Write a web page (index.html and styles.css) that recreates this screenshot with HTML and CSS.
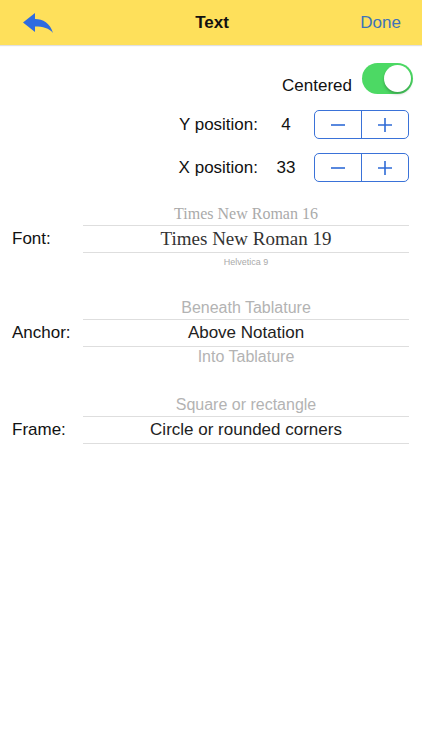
FILE: index.html
```html
<!DOCTYPE html>
<html lang="en">
<head>
  <meta charset="UTF-8">
  <meta name="viewport" content="width=device-width, initial-scale=1.0">
  <title>Text</title>
  <link rel="stylesheet" href="styles.css">
</head>
<body>
<div class="navbar">
  <div class="nav-back">
    <svg width="30" height="21" viewBox="0 0 30 21">
      <path d="M0 9.5 L12 0 L12 6 C20 6 27 10 30 20 C26 15 20 13.5 12 13.5 L12 19 Z" fill="#2d6be0"/>
    </svg>
  </div>
  <div class="nav-title">Text</div>
  <div class="nav-done">Done</div>
</div>

<div class="content">
  <div class="toggle-row">
    <span class="toggle-label">Centered</span>
    <div class="switch on"><div class="knob"></div></div>
  </div>

  <div class="step-row">
    <span class="step-label">Y position:</span>
    <span class="step-value">4</span>
    <div class="stepper">
      <div class="step-btn">
        <svg width="16" height="16" viewBox="0 0 16 16"><path d="M1 8 H15" stroke="#2f6bd6" stroke-width="1.6"/></svg>
      </div>
      <div class="step-btn">
        <svg width="16" height="16" viewBox="0 0 16 16"><path d="M1 8 H15 M8 1 V15" stroke="#2f6bd6" stroke-width="1.6"/></svg>
      </div>
    </div>
  </div>

  <div class="step-row">
    <span class="step-label">X position:</span>
    <span class="step-value">33</span>
    <div class="stepper">
      <div class="step-btn">
        <svg width="16" height="16" viewBox="0 0 16 16"><path d="M1 8 H15" stroke="#2f6bd6" stroke-width="1.6"/></svg>
      </div>
      <div class="step-btn">
        <svg width="16" height="16" viewBox="0 0 16 16"><path d="M1 8 H15 M8 1 V15" stroke="#2f6bd6" stroke-width="1.6"/></svg>
      </div>
    </div>
  </div>

  <!-- Font picker -->
  <div class="picker-row font-row">
    <div class="picker-label">Font:</div>
    <div class="picker">
      <div class="picker-item serif-16">Times New Roman 16</div>
      <div class="picker-selected serif-19">Times New Roman 19</div>
      <div class="picker-item small-item">Helvetica 9</div>
    </div>
  </div>

  <!-- Anchor picker -->
  <div class="picker-row anchor-row">
    <div class="picker-label">Anchor:</div>
    <div class="picker">
      <div class="picker-item">Beneath Tablature</div>
      <div class="picker-selected">Above Notation</div>
      <div class="picker-item bottom-item">Into Tablature</div>
    </div>
  </div>

  <!-- Frame picker -->
  <div class="picker-row frame-row">
    <div class="picker-label">Frame:</div>
    <div class="picker">
      <div class="picker-item">Square or rectangle</div>
      <div class="picker-selected">Circle or rounded corners</div>
    </div>
  </div>
</div>
</body>
</html>
```

FILE: styles.css
```css
body {
    margin: 0;
    background: white;
    font-family: "Liberation Sans", Arial, sans-serif;
    color: #111;
}
.navbar {
    height: 45px;
    background-color: #fee05b;
    display: flex;
    align-items: center;
    justify-content: space-between;
    padding: 0 21px 0 23px;
    box-shadow: 0 1px 1px rgba(0, 0, 0, 0.12);
    font-size: 17px;
}
.nav-back {
    width: 60px;
    display: flex;
    align-items: center;
    padding-top: 2px;
}
.nav-title {
    font-weight: bold;
    color: #111;
}
.nav-done {
    width: 60px;
    text-align: right;
    color: #3f73b8;
}
.content {
    font-size: 17px;
}
.toggle-row {
    display: flex;
    justify-content: flex-end;
    align-items: center;
    padding: 15px 9px 0 0;
}
.toggle-label {
    margin-right: 10px;
    padding-top: 16px;
}
.switch {
    width: 51px;
    height: 31px;
    border-radius: 16px;
    background-color: #4cd964;
    position: relative;
}
.knob {
    position: absolute;
    top: 2px;
    right: 2px;
    width: 27px;
    height: 27px;
    border-radius: 50%;
    background: white;
    box-shadow: 0 2px 3px rgba(0, 0, 0, 0.25);
}
.step-row {
    display: flex;
    justify-content: flex-end;
    align-items: center;
    padding-right: 13px;
    margin-top: 14px;
}
.step-value {
    width: 40px;
    text-align: center;
    margin: 0 8px;
}
.stepper {
    width: 93px;
    height: 27px;
    border: 1px solid #3a72d8;
    border-radius: 5px;
    display: flex;
}
.step-btn {
    flex: 1;
    display: flex;
    align-items: center;
    justify-content: center;
}
.step-btn + .step-btn {
    border-left: 1px solid #3a72d8;
}
.picker-row {
    display: flex;
    align-items: flex-start;
    padding: 0 13px 0 12px;
}
.font-row {
    margin-top: 21px;
}
.anchor-row {
    margin-top: 26px;
}
.frame-row {
    margin-top: 27px;
}
/* label lines up with the selected band, not the whole wheel */
.picker-label {
    width: 71px;
    margin-top: 26px;
    line-height: 20px;
}
.picker {
    flex: 1;
    text-align: center;
}
.picker-item {
    height: 22px;
    line-height: 22px;
    color: #b3b3b3;
    font-size: 16px;
}
.picker-selected {
    height: 26px;
    line-height: 26px;
    border-top: 1px solid #dedede;
    border-bottom: 1px solid #dedede;
    color: #222;
}
.bottom-item {
    height: 20px;
    line-height: 20px;
}
.serif-16 {
    font-family: "Liberation Serif", "Times New Roman", serif;
    color: #aaa;
}
.serif-19 {
    font-family: "Liberation Serif", "Times New Roman", serif;
    font-size: 19px;
    color: #333;
}
.small-item {
    font-size: 9px;
    height: 18px;
    line-height: 18px;
    color: #aaa;
}
```
